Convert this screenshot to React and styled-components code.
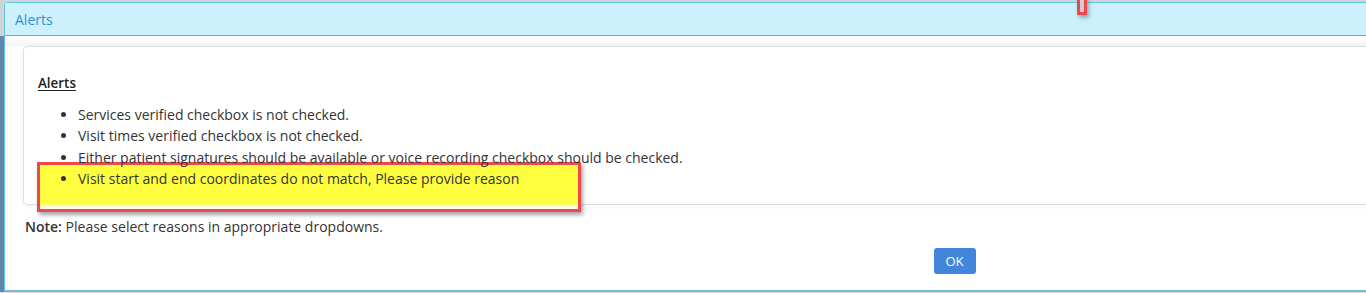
import React from "react";
import styled, { createGlobalStyle } from "styled-components";

const GlobalStyle = createGlobalStyle`
  html, body { margin: 0; padding: 0; }
  body {
    width: 1366px;
    height: 293px;
    overflow: hidden;
    font-family: "Open Sans", "Liberation Sans", sans-serif;
    color: #333;
  }
`;

const Page = styled.div`
  position: relative;
  width: 1366px;
  height: 293px;
  overflow: hidden;
  padding: 2px 0 0 4px;
  box-sizing: border-box;
  background: linear-gradient(to bottom, #d2d3d5 0, #d2d3d5 36px, #6384ab 36px, #6384ab 292px, #dcdcdc 292px);
`;

const Dialog = styled.div`
  width: 1902px;
  height: 290px;
  box-sizing: border-box;
  background: #fff;
  border-left: 1px solid #5ec4e2;
  border-top: 1px solid #5ecde4;
  border-bottom: 2px solid #79b8de;
  border-top-left-radius: 4px;
  display: flex;
  flex-direction: column;
`;

const Header = styled.div`
  height: 33px;
  box-sizing: border-box;
  background: #cdf1fc;
  border-bottom: 1px solid #2fc5dc;
  padding-left: 10px;
  display: flex;
  align-items: center;
  font-size: 14px;
  color: #2e8fd6;
`;

const Body = styled.div`
  flex: 1;
  padding: 10px 0 0 18px;
  background: linear-gradient(to bottom, #fff 0, #f5f5f5 10px, #fff 10px);
`;

const Panel = styled.div`
  position: relative;
  z-index: 0;
  width: 1860px;
  height: 159px;
  box-sizing: border-box;
  border: 1px solid #dedede;
  border-radius: 4px;
  background: #fff;
  box-shadow: 0 1px 6px rgba(0, 0, 0, 0.05);
  padding: 26px 0 0 14px;
`;

const Title = styled.div`
  font-size: 13.4px;
  font-weight: 600;
  line-height: 20px;
  text-decoration: underline;
  text-underline-offset: 2px;
  color: #222;
`;

const List = styled.ul`
  margin: 11px 0 0;
  padding-left: 40px;
  font-size: 14px;
  line-height: 21.3px;
  color: #333;
`;

const Item = styled.li`
  position: relative;
`;

const Highlight = styled.span`
  position: absolute;
  z-index: -1;
  left: -41px;
  top: -6px;
  width: 544px;
  height: 50px;
  box-sizing: border-box;
  border: 3px solid #f0474a;
  background: linear-gradient(to bottom, #ffff40 0, #ffff40 calc(100% - 5px), #f7f7d8 calc(100% - 3px), #fff 100%);
  box-shadow: 2px 3px 4px rgba(0, 0, 0, 0.35);
`;

const Note = styled.div`
  margin: 12px 0 0 2px;
  font-size: 14px;
  line-height: 20px;
  color: #333;

  b { font-weight: 600; }
`;

const Footer = styled.div`
  display: flex;
  justify-content: center;
  margin-top: 11px;
  padding-right: 20px;
`;

const OkButton = styled.button`
  width: 42px;
  height: 26px;
  border: none;
  border-radius: 3px;
  background: #4286dc;
  color: #fff;
  font-family: "Open Sans", "Liberation Sans", sans-serif;
  font-size: 13px;
  padding: 0;
  cursor: pointer;
`;

const Marker = styled.span`
  position: absolute;
  left: 1077px;
  top: -3px;
  width: 10px;
  height: 18px;
  box-sizing: border-box;
  border: 3px solid #f0474a;
  background: #c9d0d6;
  box-shadow: 2px 3px 4px rgba(0, 0, 0, 0.3);
`;

export default function App() {
  return (
    <>
      <GlobalStyle />
      <Page>
        <Dialog>
          <Header>Alerts</Header>
          <Body>
            <Panel>
              <Title>Alerts</Title>
              <List>
                <Item>Services verified checkbox is not checked.</Item>
                <Item>Visit times verified checkbox is not checked.</Item>
                <Item>
                  Either patient signatures should be available or voice recording checkbox should be checked.
                </Item>
                <Item>
                  <Highlight />
                  Visit start and end coordinates do not match, Please provide reason
                </Item>
              </List>
            </Panel>
            <Note>
              <b>Note:</b> Please select reasons in appropriate dropdowns.
            </Note>
            <Footer>
              <OkButton>OK</OkButton>
            </Footer>
          </Body>
        </Dialog>
        <Marker />
      </Page>
    </>
  );
}
